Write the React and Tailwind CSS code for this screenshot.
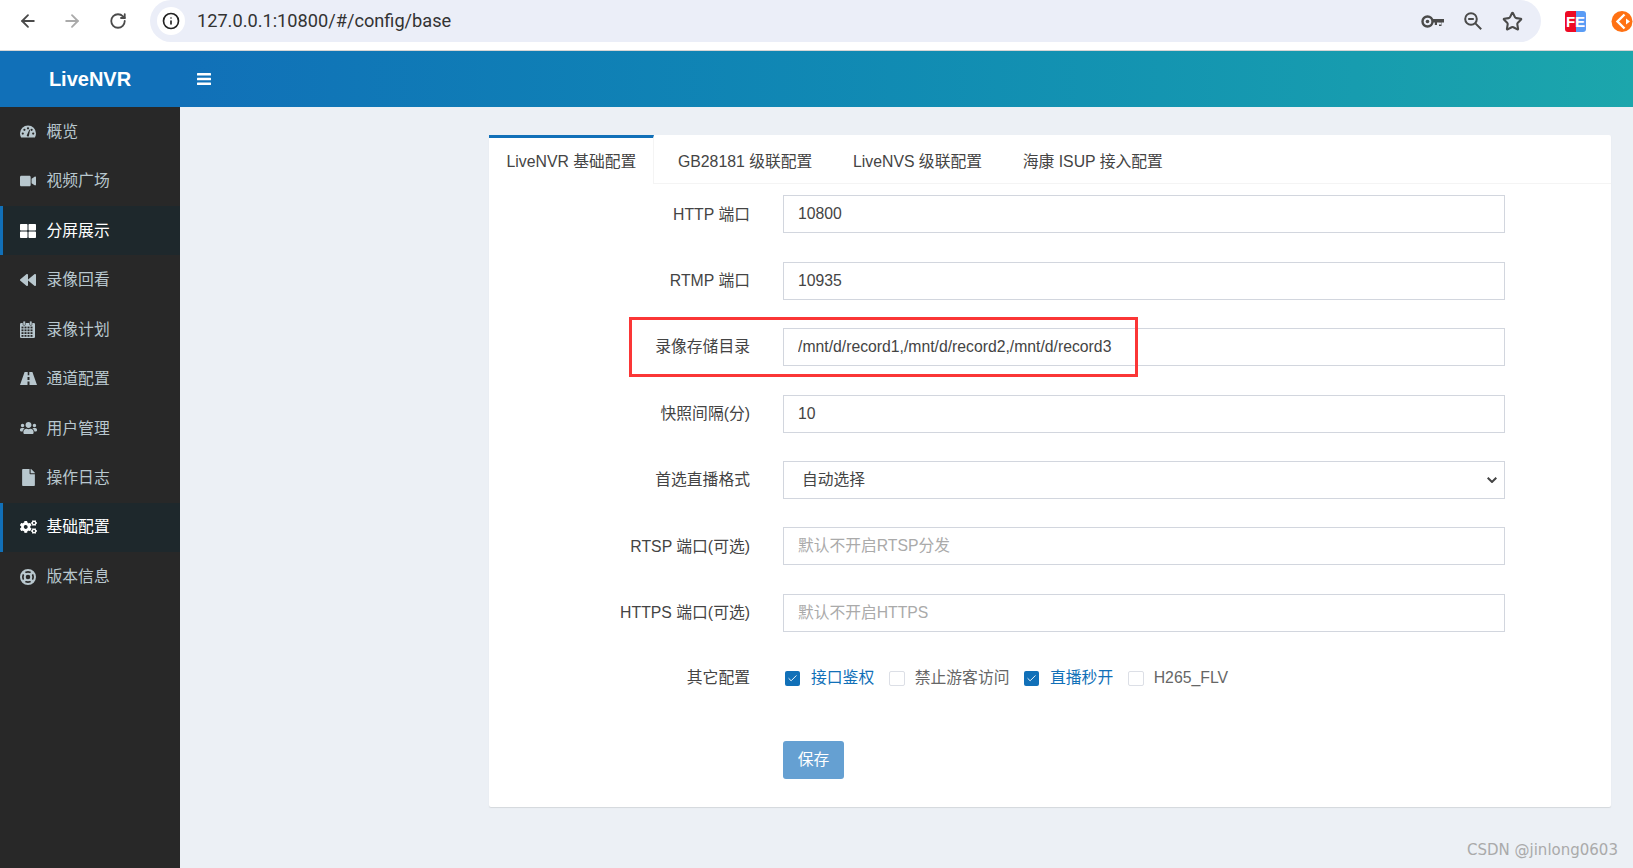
import React from "react";
import { ArrowLeft, ArrowRight, RotateCw, Info, Star, Check } from "lucide-react";
import { FaVideo, FaThLarge, FaBackward, FaUsers, FaFile, FaCogs } from "react-icons/fa";

function TachoIcon() {
  return (
    <svg width="16" height="13" viewBox="0 0 16 13">
      <path fill="currentColor" d="M8 0.5A8 8 0 0 0 0 8.5C0 10 .4 11.3 1.1 12.5H14.9C15.6 11.3 16 10 16 8.5A8 8 0 0 0 8 0.5Z" />
      <g fill="#282828">
        <circle cx="2.8" cy="8.6" r="1.1" />
        <circle cx="4.4" cy="4.8" r="1.1" />
        <circle cx="8" cy="3.3" r="1.1" />
        <circle cx="13.2" cy="8.6" r="1.1" />
        <circle cx="11.6" cy="4.8" r="1.1" />
        <path d="M6.7 10.6 9.4 4.6 10 4.9 8.8 11.2A1.3 1.3 0 0 1 6.7 10.6Z" />
      </g>
    </svg>
  );
}

function CalendarIcon() {
  return (
    <svg width="15" height="17" viewBox="0 0 15 17">
      <rect x="0" y="2" width="15" height="15" rx="1.2" fill="currentColor" />
      <rect x="3" y="0" width="2.4" height="4.4" rx="1" fill="currentColor" stroke="#282828" strokeWidth="0.6" />
      <rect x="9.6" y="0" width="2.4" height="4.4" rx="1" fill="currentColor" stroke="#282828" strokeWidth="0.6" />
      <g fill="#282828">
        {[5.6, 8.4, 11.2, 14].map((y) =>
          [1.2, 4.2, 7.2, 10.2].map((x) => (
            <rect key={x + "-" + y} x={x + 0.3} y={y} width="2" height="1.8" />
          ))
        )}
      </g>
    </svg>
  );
}

function RoadIcon() {
  return (
    <svg width="17" height="13" viewBox="0 0 17 13" fill="currentColor">
      <path d="M4.6 0H7.7V3.2H9.3V0H12.4L17 13H9.5V9.6H7.5V13H0ZM7.5 5V8H9.5V5Z" fillRule="evenodd" />
    </svg>
  );
}

function RingIcon() {
  return (
    <svg width="16" height="16" viewBox="0 0 16 16" fill="none" stroke="currentColor">
      <circle cx="8" cy="8" r="7" strokeWidth="2" />
      <circle cx="8" cy="8" r="3.3" strokeWidth="2" />
      <path d="M3 3 5.6 5.6M13 3 10.4 5.6M3 13 5.6 10.4M13 13 10.4 10.4" strokeWidth="2.6" />
    </svg>
  );
}

const Sized = (Icon, size) =>
  function SizedIcon() {
    return <Icon size={size} />;
  };

const menu = [
  { icon: TachoIcon, label: "概览" },
  { icon: Sized(FaVideo, 16), label: "视频广场" },
  { icon: Sized(FaThLarge, 16), label: "分屏展示", active: true },
  { icon: Sized(FaBackward, 16), label: "录像回看" },
  { icon: CalendarIcon, label: "录像计划" },
  { icon: RoadIcon, label: "通道配置" },
  { icon: Sized(FaUsers, 18), label: "用户管理" },
  { icon: Sized(FaFile, 17), label: "操作日志" },
  { icon: Sized(FaCogs, 18), label: "基础配置", active: true },
  { icon: RingIcon, label: "版本信息" },
];

const tabs = ["GB28181 级联配置", "LiveNVS 级联配置", "海康 ISUP 接入配置"];

const fieldClass =
  "h-[38px] w-[722px] border border-[#d2d6de] bg-white pr-[15px] text-[15.75px] text-[#444] outline-none placeholder:text-[#aaa]";
const inputClass = fieldClass + " pl-[14px]";

function Row({ label, children }) {
  return (
    <div className="flex items-center">
      <div className="w-[261px] text-right text-[15.8px] text-[#444]">{label}</div>
      <div className="ml-[33px]">{children}</div>
    </div>
  );
}

function Box({ checked, label }) {
  return (
    <label className="flex items-center">
      {checked ? (
        <span className="mr-[11px] flex h-[15px] w-[15px] items-center justify-center rounded-[2px] bg-[#1170b8]">
          <Check size={11} strokeWidth={2} className="text-white" />
        </span>
      ) : (
        <span className="mr-[10px] h-[15px] w-[16px] rounded-[2px] border border-[#dcdfe6] bg-white" />
      )}
      <span className={"text-[15.8px] " + (checked ? "text-[#1170b8]" : "text-[#666]")}>{label}</span>
    </label>
  );
}

function KeyIcon() {
  return (
    <svg width="23" height="13" viewBox="0 0 23 13" fill="none" stroke="#4a4a4a">
      <circle cx="6.5" cy="6.5" r="5" strokeWidth="2.4" />
      <circle cx="6.5" cy="6.5" r="1.8" fill="#4a4a4a" stroke="none" />
      <path d="M11.5 4H23V7.5H20.5V11H18V7.5H16V10H13.8V7.5H11.5Z" fill="#4a4a4a" stroke="none" />
      <path d="M18 7.6H20.2V9.5H18Z" fill="#ebeef8" stroke="none" />
    </svg>
  );
}

function ZoomOutIcon() {
  return (
    <svg width="18" height="18" viewBox="0 0 18 18" fill="none" stroke="#4a4a4a" strokeWidth="2">
      <circle cx="7" cy="7" r="5.8" />
      <path d="M4.2 7H9.8M11.4 11.4 17.2 17.2" />
    </svg>
  );
}

function OrangeIcon() {
  return (
    <svg width="22" height="21" viewBox="0 0 22 21" className="shrink-0">
      <circle cx="11" cy="10.5" r="10.5" fill="#ff7113" />
      <path d="M13.5 3.5 6.5 10.5 13.5 17.5" fill="none" stroke="#fff" strokeWidth="2.4" />
      <path d="M15 7.5 19 10.5 15 13.5Z" fill="#fff" />
    </svg>
  );
}

export default function App() {
  return (
    <div className="relative flex h-[868px] w-[1633px] flex-col overflow-hidden bg-[#ecf0f5] font-['Liberation_Sans','Noto_Sans_CJK_SC',sans-serif]">
      {/* browser chrome */}
      <div className="flex h-[51px] shrink-0 items-start border-b border-[#d5d5d5] bg-white">
        <ArrowLeft size={20} strokeWidth={2.2} className="ml-[18px] mt-[11px] text-[#4a4a4a]" />
        <ArrowRight size={20} strokeWidth={2.2} className="ml-[24px] mt-[11px] text-[#aaaaaa]" />
        <RotateCw size={18} strokeWidth={2.4} className="ml-[27px] mt-[12px] text-[#4a4a4a]" />
        <div className="ml-[23px] flex h-[42px] w-[1392px] items-center rounded-full bg-[#ebeef8] pl-[7px]">
          <span className="flex h-[28px] w-[28px] items-center justify-center rounded-full bg-white">
            <Info size={18} strokeWidth={2.2} className="text-[#222]" />
          </span>
          <span className="ml-[12px] text-[18.2px] text-[#333] font-['Roboto',sans-serif]">127.0.0.1:10800/#/config/base</span>
          <span className="ml-auto flex items-center">
            <KeyIcon />
            <span className="ml-[20px]"><ZoomOutIcon /></span>
            <Star size={21} strokeWidth={2.4} className="ml-[20px] mr-[18px] text-[#4a4a4a]" />
          </span>
        </div>
        <div className="ml-[24px] mt-[11px] flex h-[21px] w-[21px] items-center justify-center rounded-[3px] bg-[linear-gradient(90deg,#ee0a24_50%,#5a9cf5_50%)] text-[15px] font-bold leading-none text-white">
          FE
        </div>
        <div className="ml-[25px] mt-[11px]">
          <OrangeIcon />
        </div>
      </div>

      {/* app header */}
      <div className="flex h-[56px] shrink-0">
        <div className="flex w-[180px] items-center justify-center bg-[#1170b8] text-[20px] font-bold text-white">
          LiveNVR
        </div>
        <div className="flex flex-1 items-center bg-gradient-to-r from-[#1170b8] to-[#1ca6ac] pl-[17px]">
          <svg width="14" height="12" viewBox="0 0 14 12" fill="#fff">
            <rect y="0" width="14" height="2.6" rx="0.5" />
            <rect y="4.7" width="14" height="2.6" rx="0.5" />
            <rect y="9.4" width="14" height="2.6" rx="0.5" />
          </svg>
        </div>
      </div>

      <div className="flex min-h-0 flex-1">
        {/* sidebar */}
        <div className="w-[180px] shrink-0 bg-[#282828]">
          {menu.map((m) => {
            const Icon = m.icon;
            return (
              <div
                key={m.label}
                className={
                  "flex h-[49.45px] items-center text-[15.8px] " +
                  (m.active
                    ? "border-l-[3px] border-[#1170b8] bg-[#1e282c] pl-[17px] text-white"
                    : "pl-[20px] text-[#b8c7ce]")
                }
              >
                <span className="flex w-[17px] overflow-visible">
                  <Icon />
                </span>
                <span className="ml-[9.5px]">{m.label}</span>
              </div>
            );
          })}
        </div>

        {/* content */}
        <div className="min-w-0 flex-1 pl-[309px] pt-[28px]">
          <div className="h-[672px] w-[1122px] rounded-[2px] bg-white shadow-[0_1px_1px_rgba(0,0,0,0.1)]">
            <div className="flex h-[49px] border-b border-[#f4f4f4]">
              <div className="h-[49px] w-[165px] border-r border-t-[3px] border-r-[#f4f4f4] border-t-[#1170b8] bg-white pl-[17.5px] pt-[14px] text-[15.8px] leading-[20px] text-[#444]">
                LiveNVR 基础配置
              </div>
              <div className="flex gap-[40.7px] pl-[24px] pt-[17px] text-[15.8px] leading-[20px] text-[#444]">
                {tabs.map((t) => (
                  <span key={t}>{t}</span>
                ))}
              </div>
            </div>

            <div className="flex flex-col gap-[28.4px] pt-[11.4px]">
              <Row label="HTTP 端口">
                <input readOnly defaultValue="10800" className={inputClass} />
              </Row>
              <Row label="RTMP 端口">
                <input readOnly defaultValue="10935" className={inputClass} />
              </Row>
              <Row label="录像存储目录">
                <input readOnly defaultValue="/mnt/d/record1,/mnt/d/record2,/mnt/d/record3" className={inputClass} />
              </Row>
              <Row label="快照间隔(分)">
                <input readOnly defaultValue="10" className={inputClass} />
              </Row>
              <Row label="首选直播格式">
                <div className="relative">
                  <select defaultValue="auto" className={fieldClass + " appearance-none rounded-none pl-[18px]"}>
                    <option value="auto">自动选择</option>
                  </select>
                  <svg width="10" height="6" viewBox="0 0 10 6" fill="none" stroke="#444" strokeWidth="2" className="pointer-events-none absolute right-[8px] top-[16px]">
                    <path d="M0.7 0.7 5 5 9.3 0.7" />
                  </svg>
                </div>
              </Row>
              <Row label="RTSP 端口(可选)">
                <input readOnly placeholder="默认不开启RTSP分发" className={inputClass} />
              </Row>
              <Row label="HTTPS 端口(可选)">
                <input readOnly placeholder="默认不开启HTTPS" className={inputClass} />
              </Row>
              <Row label="其它配置">
                <div className="flex h-[36px] items-center gap-[14.5px] pl-[2px]">
                  <Box checked label="接口鉴权" />
                  <Box label="禁止游客访问" />
                  <Box checked label="直播秒开" />
                  <Box label="H265_FLV" />
                </div>
              </Row>
            </div>

            <button className="ml-[294px] mt-[45px] h-[38px] w-[61px] rounded-[3px] bg-[#65a0d2] text-[15.8px] text-white">
              保存
            </button>
          </div>
        </div>
      </div>

      {/* annotation */}
      <div className="pointer-events-none absolute left-[629px] top-[317px] h-[60px] w-[509px] border-[3px] border-[#fb3636]" />
      {/* watermark */}
      <div className="absolute left-[1467px] top-[840px] text-[15px] leading-[20px] text-[#aaa] font-['DejaVu_Sans',sans-serif]">
        CSDN @jinlong0603
      </div>
    </div>
  );
}
